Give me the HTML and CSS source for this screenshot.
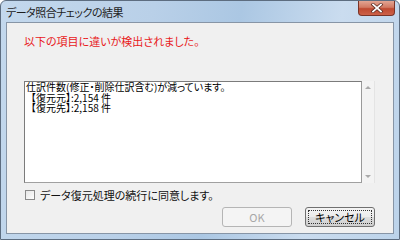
FILE: index.html
```html
<!DOCTYPE html>
<html lang="ja">
<head>
<meta charset="utf-8">
<link rel="stylesheet" href="styles.css">
</head>
<body>
<div class="window">
  <div class="titlebar">
    <span class="title">データ照合チェックの結果</span>
    <div class="close">
      <svg width="14" height="10" viewBox="0 0 14 10"><path d="M3 1.5 L11 8.5 M11 1.5 L3 8.5" stroke="#5a2a20" stroke-width="3.2" stroke-linecap="square"/><path d="M3 1.5 L11 8.5 M11 1.5 L3 8.5" stroke="#ffffff" stroke-width="1.7" stroke-linecap="square"/></svg>
    </div>
  </div>
  <div class="client">
    <p class="message">以下の項目に違いが検出されました。</p>
    <div class="detail">
      <div class="detail-text">
        <div class="line">仕訳件数(修正・削除仕訳含む)が減っています。</div>
        <div class="line"><span class="full">【</span>復元元】:2,154 件</div>
        <div class="line"><span class="full">【</span>復元先】:2,158 件</div>
      </div>
      <div class="scrollbar">
        <span class="arrow up"></span>
        <span class="arrow down"></span>
      </div>
    </div>
    <label class="agree"><span class="checkbox"></span><span>データ復元処理の続行に同意します。</span></label>
    <div class="buttons">
      <div class="btn disabled">OK</div>
      <div class="btn focused"><span class="focus">キャンセル</span></div>
    </div>
  </div>
</div>
</body>
</html>
```
FILE: styles.css
```css
* { box-sizing: border-box; }
html, body { margin: 0; padding: 0; }
body {
  width: 400px;
  height: 240px;
  overflow: hidden;
  font-family: "Noto Sans CJK JP", "Noto Sans", sans-serif;
  font-size: 11px;
  font-feature-settings: "palt";
  color: #000;
}
.window {
  width: 400px;
  height: 240px;
  display: flex;
  flex-direction: column;
  border: 1px solid #5d6d80;
  border-radius: 6px 6px 0 0;
  background: linear-gradient(100deg, #c3d8ed 0%, #b9d0e8 35%, #abc7e3 55%, #cadcef 78%, #bcd3ea 100%);
  padding: 0 5px 5px 5px;
}
.titlebar {
  height: 21px;
  display: flex;
  align-items: flex-start;
  justify-content: space-between;
  flex-shrink: 0;
}
.title {
  margin-top: 4px;
  font-size: 11px;
  line-height: 14px;
  color: #1e1e1e;
  letter-spacing: -0.5px;
}
.close {
  width: 37px;
  height: 15px;
  margin-right: -1px;
  border: 1px solid #7a3428;
  border-top: none;
  border-radius: 0 0 4px 4px;
  background: linear-gradient(#e2a593 0%, #d27a63 45%, #bf4a31 55%, #cc6148 100%);
  display: flex;
  align-items: center;
  justify-content: center;
}
.close svg { display: block; }
.client {
  flex: 1;
  border: 1px solid #8795a6;
  background: #f0f0f0;
  padding: 12px 0 0 17px;
  display: flex;
  flex-direction: column;
}
.message {
  margin: 0;
  line-height: 12px;
  color: #e8191b;
}
.detail {
  margin-top: 34px;
  width: 351px;
  height: 102px;
  display: flex;
}
.detail-text {
  width: 338px;
  border: 1px solid #7b7b7b;
  border-right-color: #9a9a9a;
  border-bottom-color: #a0a0a0;
  background: #fff;
  padding: 0 0 0 1px;
  font-size: 10px;
}
.line {
  height: 10.7px;
  line-height: 10.7px;
}
.full {
  font-feature-settings: normal;
}
.scrollbar {
  width: 13px;
  background: #f3f3f3;
  border-right: 1px solid #e4e4e4;
  display: flex;
  flex-direction: column;
  justify-content: space-between;
  align-items: center;
  padding: 5px 0 5px;
}
.arrow {
  width: 0;
  height: 0;
  border-left: 3px solid transparent;
  border-right: 3px solid transparent;
}
.arrow.up { border-bottom: 3px solid #a9a9a9; }
.arrow.down { border-top: 3px solid #a9a9a9; }
.agree {
  margin-top: 6px;
  display: flex;
  align-items: center;
  gap: 5px;
  line-height: 12px;
  color: #111;
}
.checkbox {
  width: 10px;
  height: 10px;
  margin-left: 1px;
  border: 1px solid #8a8a8a;
  background: linear-gradient(135deg, #e6e6e6, #ffffff);
}
.buttons {
  margin-top: 6px;
  width: 351px;
  display: flex;
  justify-content: flex-end;
  gap: 13px;
}
.btn {
  width: 70px;
  height: 20px;
  border-radius: 3px;
  display: flex;
  align-items: center;
  justify-content: center;
  font-size: 11px;
}
.btn.disabled {
  border: 1px solid #b5b5b5;
  background: #f4f4f4;
  color: #a7a7a7;
}
.btn.focused {
  border: 1px solid #707070;
  background: linear-gradient(#f4f4f4 0%, #ebebeb 50%, #dddddd 52%, #cfcfcf 100%);
  padding: 2px;
}
.focus {
  flex: 1;
  height: 100%;
  border: 1px dotted #333;
  display: flex;
  align-items: center;
  justify-content: center;
  color: #000;
}
```
